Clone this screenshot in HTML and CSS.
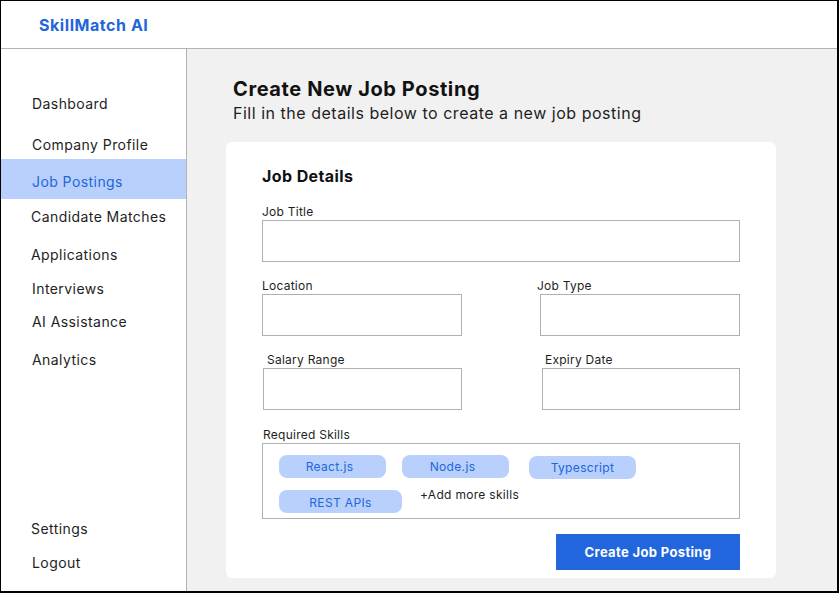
FILE: index.html
```html
<!DOCTYPE html>
<html lang="en">
<head>
<meta charset="utf-8">
<title>SkillMatch AI - Create New Job Posting</title>
<link rel="stylesheet" href="styles.css">
</head>
<body>
<div class="app">
  <header class="topbar">
    <div class="brand">SkillMatch AI</div>
  </header>
  <div class="body-row">
    <aside class="sidebar">
      <nav class="nav nav--main">
        <a class="nav-item nav-item--dashboard">Dashboard</a>
        <a class="nav-item nav-item--company">Company Profile</a>
        <a class="nav-item nav-item--active">Job Postings</a>
        <a class="nav-item nav-item--candidates">Candidate Matches</a>
        <a class="nav-item nav-item--applications">Applications</a>
        <a class="nav-item nav-item--interviews">Interviews</a>
        <a class="nav-item nav-item--ai">AI Assistance</a>
        <a class="nav-item nav-item--analytics">Analytics</a>
      </nav>
      <nav class="nav nav--bottom">
        <a class="nav-item nav-item--settings">Settings</a>
        <a class="nav-item nav-item--logout">Logout</a>
      </nav>
    </aside>
    <main class="main">
      <h1 class="page-title">Create New Job Posting</h1>
      <p class="page-subtitle">Fill in the details below to create a new job posting</p>
      <section class="card">
        <h2 class="card-title">Job Details</h2>
        <div class="form">
          <div class="field field--full">
            <div class="label">Job Title</div>
            <div class="input"></div>
          </div>
          <div class="field-row">
            <div class="field">
              <div class="label">Location</div>
              <div class="input"></div>
            </div>
            <div class="field">
              <div class="label label--jobtype">Job Type</div>
              <div class="input"></div>
            </div>
          </div>
          <div class="field-row">
            <div class="field">
              <div class="label label--salary">Salary Range</div>
              <div class="input input--salary"></div>
            </div>
            <div class="field">
              <div class="label label--expiry">Expiry Date</div>
              <div class="input input--expiry"></div>
            </div>
          </div>
          <div class="field field--full field--skills">
            <div class="label label--skills">Required Skills</div>
            <div class="skills-box">
              <div class="chip-row">
                <span class="chip chip--offset">React.js</span>
                <span class="chip chip--offset">Node.js</span>
                <span class="chip chip--typescript">Typescript</span>
              </div>
              <div class="chip-row chip-row--second">
                <span class="chip chip--wide">REST APIs</span>
                <span class="add-skill">+Add more skills</span>
              </div>
            </div>
          </div>
          <div class="actions">
            <button class="btn-primary" type="button">Create Job Posting</button>
          </div>
        </div>
      </section>
    </main>
  </div>
</div>
</body>
</html>
```
FILE: styles.css
```css
* { box-sizing: border-box; }
html, body { margin: 0; padding: 0; }
body {
  font-family: "Inter", "Noto Sans", "Liberation Sans", sans-serif;
  color: #1e1e1e;
  background: #ffffff;
}
.app {
  width: 839px;
  height: 593px;
  border-style: solid;
  border-color: #000;
  border-width: 1px 2px 2px 1px;
  display: flex;
  flex-direction: column;
  overflow: hidden;
}
.topbar {
  height: 48px;
  flex: 0 0 48px;
  border-bottom: 1px solid #b3b3b3;
  display: flex;
  align-items: center;
  padding-left: 38px;
  background: #fff;
}
.brand {
  font-size: 16px;
  line-height: 20px;
  font-weight: 700;
  color: #2166dd;
  letter-spacing: 0.55px;
}
.body-row {
  flex: 1;
  display: flex;
  min-height: 0;
}
.sidebar {
  width: 186px;
  flex: 0 0 186px;
  border-right: 1px solid #b3b3b3;
  background: #fff;
  display: flex;
  flex-direction: column;
  justify-content: space-between;
  padding: 45px 0 18px;
}
.nav { display: flex; flex-direction: column; }
.nav-item {
  display: block;
  font-size: 14px;
  line-height: 20px;
  padding-left: 31px;
  color: #1e1e1e;
  letter-spacing: 0.43px;
}
.nav-item--company { margin-top: 21px; }
.nav-item--active {
  margin-top: 4px;
  padding-top: 13px;
  padding-bottom: 7px;
  background: #b8d0fb;
  color: #2166dd;
}
.nav-item--candidates { margin-top: 8px; padding-left: 30px; }
.nav-item--applications { margin-top: 18px; padding-left: 30px; }
.nav-item--interviews { margin-top: 14px; }
.nav-item--ai { margin-top: 13px; }
.nav-item--analytics { margin-top: 18px; }
.nav-item--settings { padding-left: 30px; }
.nav-item--logout { margin-top: 14px; }

.main {
  flex: 1;
  background: #f1f1f1;
  padding: 28px 0 0 39px;
}
.page-title {
  margin: 0 0 2px 7px;
  font-size: 20px;
  line-height: 24px;
  font-weight: 700;
  color: #111;
  letter-spacing: 0.6px;
}
.page-subtitle {
  margin: 0 0 19px 7px;
  font-size: 16px;
  line-height: 20px;
  color: #1e1e1e;
  letter-spacing: 0.52px;
}
.card {
  width: 550px;
  height: 436px;
  background: #fff;
  border-radius: 6px;
  padding: 24px 36px 8px;
}
.card-title {
  margin: 0 0 18px;
  font-size: 16px;
  line-height: 20px;
  font-weight: 700;
  color: #111;
  letter-spacing: 0.4px;
}
.form { display: flex; flex-direction: column; }
.field { display: flex; flex-direction: column; }
.field-row {
  display: grid;
  grid-template-columns: 200px 200px;
  justify-content: space-between;
  margin-top: 16px;
}
.label {
  font-size: 12px;
  line-height: 16px;
  color: #1e1e1e;
  letter-spacing: 0.25px;
}
.label--jobtype { margin-left: -3px; }
.label--salary { margin-left: 5px; }
.label--expiry { margin-left: 5px; }
.label--skills { margin-left: 1px; }
.input {
  height: 42px;
  border: 1px solid #b0b0b0;
  background: #fff;
}
.input--salary { margin-left: 1px; }
.input--expiry { margin-left: 2px; }
.field--skills { margin-top: 17px; }
.skills-box {
  height: 76px;
  border: 1px solid #b0b0b0;
  padding: 11px 16px 0;
}
.chip-row {
  display: flex;
  align-items: flex-start;
  gap: 16px;
}
.chip-row--second { margin-top: 11px; gap: 18px; }
.chip {
  width: 107px;
  height: 23px;
  border-radius: 8px;
  background: #b8d0fb;
  color: #2166dd;
  font-size: 12px;
  line-height: 23px;
  text-align: center;
  letter-spacing: 0.35px;
}
.chip--offset { padding-right: 6px; }
.chip--typescript { margin-left: 4px; margin-top: 1px; }
.chip--wide { width: 123px; padding-top: 1px; }
.add-skill {
  font-size: 12px;
  line-height: 16px;
  color: #1e1e1e;
  letter-spacing: 0.3px;
  margin-top: -3px;
}
.actions {
  display: flex;
  justify-content: flex-end;
  margin-top: 15px;
}
.btn-primary {
  width: 184px;
  height: 36px;
  border: none;
  border-radius: 0;
  background: #2166dd;
  color: #fff;
  font-family: inherit;
  font-size: 13px;
  font-weight: 700;
  letter-spacing: 0.35px;
  padding: 0;
}
```
